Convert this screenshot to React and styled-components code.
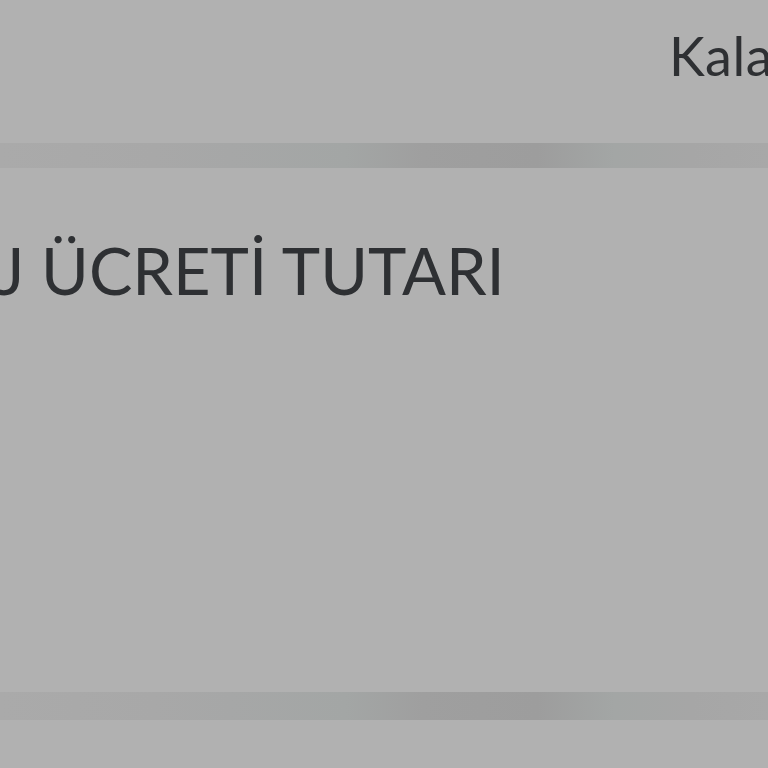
import React from "react";
import styled, { createGlobalStyle } from "styled-components";

const Global = createGlobalStyle`
  html, body { margin: 0; padding: 0; background: #b1b1b1; }
  body { font-family: Lato, "Open Sans", "Liberation Sans", sans-serif; }
`;

const Page = styled.div`
  width: 768px;
  height: 768px;
  overflow: hidden;
  background: #b1b1b1;
  display: flex;
  flex-direction: column;
`;

const Header = styled.div`
  height: 143px;
  display: flex;
  align-items: flex-start;
  padding-left: 669px;
  white-space: nowrap;
  overflow: hidden;
`;

const HeaderText = styled.span`
  font-size: 54px;
  line-height: 1;
  margin-top: 29px;
  color: #2e3033;
  font-weight: 400;
  letter-spacing: 0.5px;
`;

const Band = styled.div`
  height: ${(p) => p.$h}px;
  flex-shrink: 0;
  background: linear-gradient(
    90deg,
    #aaaaaa 0%,
    #a8a8a8 20%,
    #a6a7a7 30%,
    #a3a6a5 45%,
    #9f9f9f 55%,
    #9d9d9d 70%,
    #a3a6a5 80%,
    #a6a6a6 90%,
    #a8a8a8 100%
  );
`;

const Content = styled.div`
  flex: 1;
  display: flex;
  flex-direction: column;
  overflow: hidden;
`;

const Title = styled.div`
  margin-top: 70px;
  margin-left: -3px;
  font-size: 65px;
  line-height: 1;
  color: #2e3033;
  white-space: nowrap;
  letter-spacing: 0px;
  word-spacing: 0px;
`;

const Footer = styled.div`
  height: 48px;
`;

export default function App() {
  return (
    <Page>
      <Global />
      <Header>
        <HeaderText>Kalan</HeaderText>
      </Header>
      <Band $h={25} />
      <Content>
        <Title>J ÜCRETİ TUTARI</Title>
      </Content>
      <Band $h={28} />
      <Footer />
    </Page>
  );
}
